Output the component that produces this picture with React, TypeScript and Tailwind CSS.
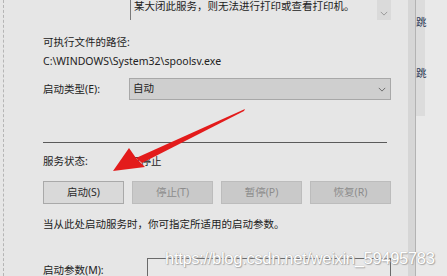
import React from 'react';

const font = { fontFamily: '"Noto Sans", "Noto Sans CJK SC", sans-serif' };

const ChevronDown = ({ className }: { className?: string }) => (
  <svg viewBox="0 0 10 6" className={className} fill="none" stroke="currentColor" strokeWidth="1">
    <path d="M1 1l4 4 4-4" />
  </svg>
);

const ServiceButton = ({ label, disabled }: { label: string; disabled?: boolean }) => (
  <div
    className={
      disabled
        ? 'h-[23px] w-[81px] flex items-center justify-center border border-[#bcbcbc] bg-[#c9c9c9] text-[#8c8c8c] text-[10.5px]'
        : 'h-[23px] w-[81px] flex items-center justify-center border border-[#a9a9a9] bg-[#d9d9d9] text-[#2a2a2a] text-[10.5px]'
    }
  >
    {label}
  </div>
);

export default function App() {
  return (
    <div className="relative w-[447px] h-[276px] overflow-hidden bg-[#e6e6e6] flex text-[#222] text-[10.5px]" style={font}>
      {/* main property page */}
      <div className="w-[405px] h-full shrink-0 border-l border-dashed border-[#b5b5b5] ml-[3px] pl-[39px] pr-[17px] flex flex-col overflow-hidden">
        {/* description box (scrolled) */}
        <div className="shrink-0 ml-[87px] h-[20px] flex border-l border-[#7a7a7a]">
          <div className="flex-1 pl-[3px] leading-[12px] whitespace-nowrap overflow-hidden">
            某大闭此服务，则无法进行打印或查看打印机。
          </div>
          <div className="w-[14px] bg-[#dadada] flex items-end justify-center pb-[4px] text-[#8a8a8a]">
            <ChevronDown className="w-[8px] h-[5px]" />
          </div>
        </div>

        <div className="shrink-0 mt-[15px] leading-[14px]">可执行文件的路径:</div>
        <div className="shrink-0 mt-[5px] leading-[14px]">C:\WINDOWS\System32\spoolsv.exe</div>

        <div className="shrink-0 mt-[10px] flex items-center">
          <div className="w-[86px] leading-[14px]">启动类型(E):</div>
          <div className="flex-1 h-[22px] border border-[#a8a8a8] bg-[#cfcfcf] flex items-center justify-between pl-[3px] pr-[4px]">
            <span>自动</span>
            <ChevronDown className="w-[8px] h-[5px] text-[#555]" />
          </div>
        </div>

        <div className="shrink-0 mt-[42px] h-px bg-[#5a5a5a] mr-[4px]" />

        <div className="shrink-0 mt-[11px] flex items-center leading-[14px]">
          <div className="w-[87px]">服务状态:</div>
          <div>已停止</div>
        </div>

        <div className="shrink-0 mt-[13px] flex justify-between">
          <ServiceButton label="启动(S)" />
          <ServiceButton label="停止(T)" disabled />
          <ServiceButton label="暂停(P)" disabled />
          <ServiceButton label="恢复(R)" disabled />
        </div>

        <div className="shrink-0 mt-[13px] leading-[14px]">当从此处启动服务时，你可指定所适用的启动参数。</div>

        <div className="shrink-0 mt-[27px] flex items-start">
          <div className="w-[104px] leading-[14px] mt-[5px]">启动参数(M):</div>
          <div className="flex-1 h-[30px] border border-[#6a6a6a] bg-[#e8e8e8]" />
        </div>
      </div>

      {/* window edge */}
      <div className="w-[8px] h-full shrink-0 bg-[#d6d6d6] border-r border-[#b3b3b3]" />
      <div className="flex-1 h-full bg-[#e9e9e9] relative overflow-hidden">
        <div className="absolute left-0 top-0 w-[9px] h-[116px] bg-[#dcdcdc]" />
        <div className="absolute left-0 top-[15px] leading-[14px] text-[#2b3a55]">跳</div>
        <div className="absolute left-0 top-[66px] leading-[14px] text-[#2b3a55]">跳</div>
      </div>

      {/* red annotation arrow */}
      <svg className="absolute left-0 top-0 pointer-events-none" width="447" height="276" viewBox="0 0 447 276">
        <path d="M245 109 L244 111 L142 163 L136 158 Z" fill="#e31b1b" />
        <path d="M113 171 L129 148 L136 158 L145 167 Z" fill="#e31b1b" />
      </svg>

      {/* watermark */}
      <div
        className="absolute left-[165px] top-[248px] text-[16.5px] leading-[20px] text-white tracking-[-0.3px]"
        style={{ fontFamily: '"Liberation Sans", Arial, sans-serif', textShadow: '0 0 1px #999, 1px 1px 1px #aaa' }}
      >
        https://blog.csdn.net/weixin_59495783
      </div>
    </div>
  );
}
